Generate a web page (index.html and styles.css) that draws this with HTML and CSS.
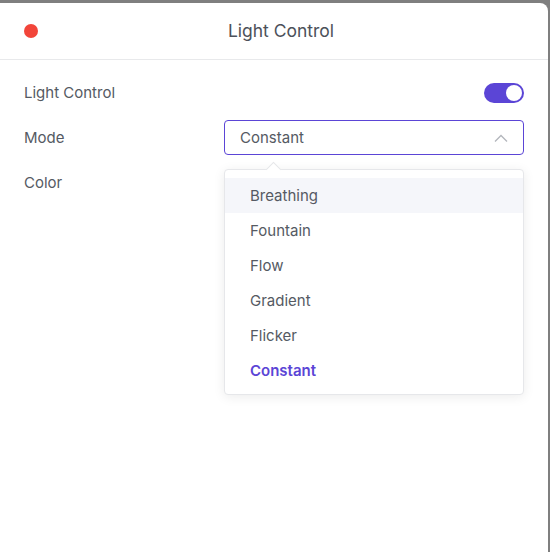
FILE: index.html
```html
<!DOCTYPE html>
<html>
<head>
<meta charset="utf-8">
<link rel="stylesheet" href="styles.css">
</head>
<body>
<div class="window">
  <div class="header">
    <span class="close-dot"></span>
    <div class="title">Light Control</div>
  </div>
  <div class="content">
    <div class="row">
      <div class="label">Light Control</div>
      <div class="toggle"><span class="knob"></span></div>
    </div>
    <div class="row">
      <div class="label">Mode</div>
      <div class="select-wrap">
        <div class="select">
          <span class="select-value">Constant</span>
          <svg class="chevron" width="14" height="8" viewBox="0 0 14 8"><path d="M1 7.5 L7 1.5 L13 7.5" fill="none" stroke="#b3b6bc" stroke-width="1.3"/></svg>
        </div>
        <div class="dropdown">
          <span class="dropdown-arrow"></span>
          <div class="option hovered">Breathing</div>
          <div class="option">Fountain</div>
          <div class="option">Flow</div>
          <div class="option">Gradient</div>
          <div class="option">Flicker</div>
          <div class="option selected">Constant</div>
        </div>
      </div>
    </div>
    <div class="row">
      <div class="label">Color</div>
    </div>
  </div>
</div>
</body>
</html>
```
FILE: styles.css
```css
html, body {
  margin: 0;
  padding: 0;
  background: #7f7f7f;
  font-family: Inter, "Noto Sans", sans-serif;
}
.window {
  margin-top: 3px;
  margin-right: 2px;
  height: 549px;
  background: #ffffff;
  border-top-right-radius: 8px;
  display: flex;
  flex-direction: column;
}
.header {
  height: 56px;
  border-bottom: 1px solid #e8e9eb;
  display: flex;
  align-items: center;
  justify-content: center;
  padding-left: 14px;
  padding-bottom: 1px;
  box-sizing: border-box;
  height: 57px;
  position: relative;
}
.close-dot {
  position: absolute;
  left: 24px;
  top: 21px;
  width: 14px;
  height: 14px;
  border-radius: 50%;
  background: #f2453a;
}
.title {
  font-size: 17.5px;
  color: #4c515a;
}
.content {
  padding: 10px 24px 0 24px;
}
.row {
  height: 45px;
  display: flex;
  align-items: center;
  justify-content: space-between;
}
.label {
  font-size: 15px;
  color: #555a63;
}
.toggle {
  width: 40px;
  height: 20px;
  border-radius: 10px;
  background: #5b45d6;
  display: flex;
  align-items: center;
  justify-content: flex-end;
  padding: 0 2px;
  box-sizing: border-box;
}
.knob {
  width: 16px;
  height: 16px;
  border-radius: 50%;
  background: #ffffff;
}
.select-wrap {
  position: relative;
  width: 300px;
}
.select {
  height: 35px;
  box-sizing: border-box;
  border: 1px solid #5b45d6;
  border-radius: 4px;
  display: flex;
  align-items: center;
  justify-content: space-between;
  padding: 0 15px;
}
.select-value {
  font-size: 15px;
  color: #555a63;
}
.chevron {
  display: block;
}
.dropdown {
  position: absolute;
  top: 49px;
  left: 0;
  right: 0;
  background: #ffffff;
  border: 1px solid #e6e7ea;
  border-radius: 4px;
  box-shadow: 0 2px 12px rgba(0, 0, 0, 0.08);
  padding: 8px 0 6px 0;
  box-sizing: border-box;
  z-index: 2;
}
.dropdown-arrow {
  position: absolute;
  top: -6px;
  left: 43px;
  width: 10px;
  height: 10px;
  background: #ffffff;
  border-left: 1px solid #e6e7ea;
  border-top: 1px solid #e6e7ea;
  transform: rotate(45deg);
}
.option {
  height: 35px;
  display: flex;
  align-items: center;
  padding-left: 25px;
  font-size: 15px;
  color: #555a63;
  position: relative;
}
.option.hovered {
  background: #f5f6fa;
}
.option.selected {
  color: #5b45d6;
  font-weight: 600;
}
```
